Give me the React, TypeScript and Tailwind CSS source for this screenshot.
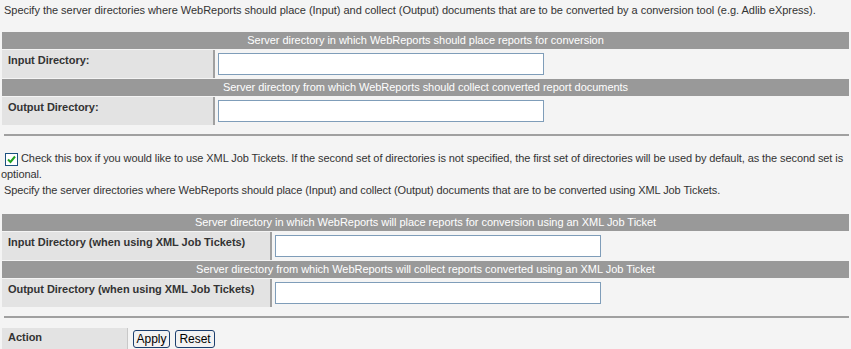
import React from "react"

const font = "font-['Liberation_Sans',Arial,sans-serif]"

function HeaderRow({ text }: { text: string }) {
  return (
    <div className="h-[17px] bg-[#999999] text-center text-[11px] leading-[17px] text-white">
      {text}
    </div>
  )
}

function FieldRow({ label, labelWidth }: { label: string; labelWidth: string }) {
  return (
    <div className="flex h-[28px] mt-px mb-px">
      <div className={`${labelWidth} shrink-0 bg-[#e3e3e3] pl-[6px] pt-[4px] text-[11px] font-bold leading-[13px] text-[#333]`}>
        {label}
      </div>
      <div className="w-[2px] shrink-0 bg-[#a0a0a0]" />
      <div className="flex-1 pl-[3px] pt-[3px]">
        <input className="block h-[22px] w-[326px] border border-[#7f9db9] bg-white outline-none" />
      </div>
    </div>
  )
}

export default function App() {
  return (
    <div className={`${font} min-h-[349px] w-[851px] overflow-hidden bg-[#f4f4f4] text-[11px] tracking-[-0.03px] text-[#333]`}>
      <p className="px-[4px] pt-[3px] leading-[14px]">
        Specify the server directories where WebReports should place (Input) and collect (Output) documents that are to be converted by a conversion tool (e.g. Adlib eXpress).
      </p>

      {/* first set */}
      <div className="ml-[2px] mt-[15px] w-[847px]">
        <HeaderRow text="Server directory in which WebReports should place reports for conversion" />
        <FieldRow label="Input Directory:" labelWidth="w-[211px]" />
        <HeaderRow text="Server directory from which WebReports should collect converted report documents" />
        <FieldRow label="Output Directory:" labelWidth="w-[211px]" />
      </div>

      <div className="ml-[4px] mt-[9px] h-[2px] w-[845px] bg-[#a0a0a0]" />

      <div className="mt-[14px] pl-[1px] leading-[16px] tracking-[-0.09px]">
        <span className="relative top-[2px] mr-[3px] ml-[4px] inline-flex h-[13px] w-[13px] items-center justify-center border border-[#1c5180] bg-white align-baseline">
          <svg width="9" height="9" viewBox="0 0 9 9">
            <path d="M1 4.5 L3.5 7 L8 1.5" fill="none" stroke="#21a121" strokeWidth="2" />
          </svg>
        </span>
        Check this box if you would like to use XML Job Tickets. If the second set of directories is not specified, the first set of directories will be used by default, as the second set is optional.
        <br />
        &nbsp;Specify the server directories where WebReports should place (Input) and collect (Output) documents that are to be converted using XML Job Tickets.
      </div>

      {/* XML job ticket set */}
      <div className="ml-[2px] mt-[16px] w-[847px]">
        <HeaderRow text="Server directory in which WebReports will place reports for conversion using an XML Job Ticket" />
        <FieldRow label="Input Directory (when using XML Job Tickets)" labelWidth="w-[268px]" />
        <HeaderRow text="Server directory from which WebReports will collect reports converted using an XML Job Ticket" />
        <FieldRow label="Output Directory (when using XML Job Tickets)" labelWidth="w-[268px]" />
      </div>

      <div className="ml-[4px] mt-[9px] h-[2px] w-[845px] bg-[#a0a0a0]" />

      <div className="ml-[2px] mt-[10px] flex h-[22px]">
        <div className="w-[126px] shrink-0 border-r border-[#c8c8c8] bg-[#e3e3e3] pl-[6px] pt-[3px] font-bold leading-[13px]">
          Action
        </div>
        <div className="flex gap-[5px] pl-[5px] pt-[2px]">
          <button className="h-[18px] w-[37px] rounded-[3px] border border-[#1c3f6e] bg-[#f2f2f2] text-[12px] leading-[14px] text-black">
            Apply
          </button>
          <button className="h-[18px] w-[40px] rounded-[3px] border border-[#1c3f6e] bg-[#f2f2f2] text-[12px] leading-[14px] text-black">
            Reset
          </button>
        </div>
      </div>
    </div>
  )
}
